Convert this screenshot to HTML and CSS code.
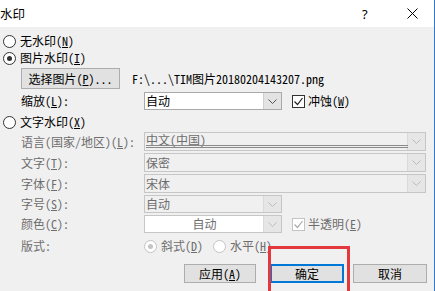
FILE: index.html
```html
<!DOCTYPE html>
<html>
<head>
<meta charset="utf-8">
<link rel="stylesheet" href="styles.css">
</head>
<body>
<div class="title">
  <span class="ttext">水印</span>
  <span class="help">?</span>
  <svg class="close" width="11" height="11" viewBox="0 0 11 11"><path d="M0.5 0.5L10.5 10.5M10.5 0.5L0.5 10.5" stroke="#000" stroke-width="1" fill="none"/></svg>
</div>
<div class="content">
  <div class="row r1"><span class="radio"></span><span class="rlabel">无水印(<u>N</u>)</span></div>
  <div class="row r2"><span class="radio on"></span><span class="rlabel">图片水印(<u>I</u>)</span></div>
  <div class="row r3 indent"><span class="btn pick">选择图片(<u>P</u>)...</span><span class="path">F:\...\TIM图片20180204143207.png</span></div>
  <div class="row r4 indent">
    <span class="label">缩放(<u>L</u>):</span>
    <span class="combo short"><span class="val">自动</span><span class="dd"><svg width="9" height="5" viewBox="0 0 9 5"><path d="M0.5 0.5L4.5 4.5L8.5 0.5" stroke="#555" fill="none"/></svg></span></span>
    <span class="check on"><svg width="11" height="11" viewBox="0 0 11 11"><path d="M1.5 5.5L4.5 8.5L9.5 2" stroke="#222" stroke-width="1.2" fill="none"/></svg></span>
    <span class="clabel">冲蚀(<u>W</u>)</span>
  </div>
  <div class="row r5"><span class="radio"></span><span class="rlabel">文字水印(<u>X</u>)</span></div>
  <div class="row r6 indent">
    <span class="label dis">语言(国家/地区)(<u>L</u>):</span>
    <span class="combo wide dis lang"><span class="val up">中文(中国)</span><span class="dd"><svg width="9" height="5" viewBox="0 0 9 5"><path d="M0.5 0.5L4.5 4.5L8.5 0.5" stroke="#bbb" fill="none"/></svg></span></span>
  </div>
  <div class="row r7 indent">
    <span class="label dis">文字(<u>T</u>):</span>
    <span class="combo wide dis"><span class="val">保密</span><span class="dd"><svg width="9" height="5" viewBox="0 0 9 5"><path d="M0.5 0.5L4.5 4.5L8.5 0.5" stroke="#bbb" fill="none"/></svg></span></span>
  </div>
  <div class="row r8 indent">
    <span class="label dis">字体(<u>F</u>):</span>
    <span class="combo wide dis"><span class="val">宋体</span><span class="dd"><svg width="9" height="5" viewBox="0 0 9 5"><path d="M0.5 0.5L4.5 4.5L8.5 0.5" stroke="#bbb" fill="none"/></svg></span></span>
  </div>
  <div class="row r9 indent">
    <span class="label dis">字号(<u>S</u>):</span>
    <span class="combo short dis"><span class="val">自动</span><span class="dd"><svg width="9" height="5" viewBox="0 0 9 5"><path d="M0.5 0.5L4.5 4.5L8.5 0.5" stroke="#bbb" fill="none"/></svg></span></span>
  </div>
  <div class="row r10 indent">
    <span class="label dis">颜色(<u>C</u>):</span>
    <span class="combo short dis color"><span class="val center">自动</span><span class="dd"><svg width="9" height="5" viewBox="0 0 9 5"><path d="M0.5 0.5L4.5 4.5L8.5 0.5" stroke="#bbb" fill="none"/></svg></span></span>
    <span class="check on dis"><svg width="11" height="11" viewBox="0 0 11 11"><path d="M1.5 5.5L4.5 8.5L9.5 2" stroke="#aaa" stroke-width="1.2" fill="none"/></svg></span>
    <span class="clabel dis">半透明(<u>E</u>)</span>
  </div>
  <div class="row r11 indent">
    <span class="label dis">版式:</span>
    <span class="radio on dis"></span><span class="rlabel dis">斜式(<u>D</u>)</span>
    <span class="radio dis second"></span><span class="rlabel dis">水平(<u>H</u>)</span>
  </div>
  <div class="row r12">
    <span class="btn apply">应用(<u>A</u>)</span>
    <span class="btn ok">确定</span>
    <span class="btn cancel">取消</span>
  </div>
</div>
<div class="highlight"></div>
</body>
</html>
```

FILE: styles.css
```css
html, body {
  margin: 0;
  padding: 0;
}
body {
  width: 435px;
  height: 291px;
  overflow: hidden;
  background: #f0f0f0;
  font-family: "Noto Sans Mono CJK SC", "Noto Sans CJK SC", sans-serif;
  font-size: 12px;
  color: #000;
  position: relative;
  border-right: 1px solid #2c7bd0;
  box-sizing: border-box;
}
u {
  text-decoration: underline;
  text-underline-offset: 1px;
}
.title {
  height: 27px;
  background: #fff;
  display: flex;
  align-items: center;
  font-family: "Noto Sans CJK SC", sans-serif;
}
.ttext {
  font-size: 12.5px;
  margin-left: 0;
}
.help {
  margin-left: auto;
  font-family: "Noto Sans", sans-serif;
  font-size: 13px;
  width: 8px;
}
.close {
  margin-left: 37px;
  margin-right: 16px;
}
.content {
  display: flex;
  flex-direction: column;
}
.row {
  display: flex;
  align-items: center;
  line-height: 14px;
  white-space: nowrap;
}
.indent {
  padding-left: 21px;
}
.r1 { margin-top: 7px; height: 14px; }
.r2 { margin-top: 3px; height: 14px; }
.r3 { margin-top: 3px; height: 21px; }
.r4 { margin-top: 3px; height: 18px; }
.r5 { margin-top: 5px; height: 14px; }
.r6 { margin-top: 3px; height: 19px; }
.r7 { margin-top: 2px; height: 19px; }
.r8 { margin-top: 2px; height: 19px; }
.r9 { margin-top: 2px; height: 18px; }
.r10 { margin-top: 2px; height: 18px; }
.r11 { margin-top: 6px; height: 14px; }
.r12 { margin-top: 11px; height: 19px; }

.radio {
  width: 13px;
  height: 13px;
  box-sizing: border-box;
  border: 1px solid #333;
  border-radius: 50%;
  background: #fff;
  margin-left: 3px;
  display: flex;
  align-items: center;
  justify-content: center;
  flex: none;
}
.radio.on::after {
  content: "";
  width: 5px;
  height: 5px;
  border-radius: 50%;
  background: #333;
}
.radio.dis {
  border-color: #c4c4c4;
  margin-left: 0;
}
.radio.dis.on::after {
  background: #c4c4c4;
}
.radio.second {
  margin-left: 10px;
}
.rlabel {
  margin-left: 4px;
}
.dis {
  color: #6d6d6d;
}
.label {
  width: 123px;
  flex: none;
}
.btn {
  display: flex;
  align-items: center;
  justify-content: center;
  box-sizing: border-box;
  border: 1px solid #adadad;
  background: #e1e1e1;
  height: 100%;
  flex: none;
}
.pick {
  width: 99px;
}
.path {
  margin-left: 12px;
}
.combo {
  display: flex;
  box-sizing: border-box;
  border: 1px solid #a9a9a9;
  background: #fff;
  height: 100%;
  flex: none;
  position: relative;
}
.combo.short { width: 138px; }
.combo.wide { width: 282px; }
.combo .val {
  flex: 1;
  padding-left: 1px;
  display: flex;
  align-items: center;
}
.combo .val.up {
  padding-bottom: 3px;
}
.combo .val.center {
  justify-content: center;
}
.combo .dd {
  width: 17px;
  background: #e3e3e3;
  border-left: 1px solid #d0d0d0;
  display: flex;
  align-items: center;
  justify-content: center;
}
.combo.dis {
  border-color: #c6c6c6;
  background: #f0f0f0;
}
.combo.dis .dd {
  background: #e6e6e6;
  border-left-color: #dadada;
}
.combo.color {
  background: #fff;
}
.combo.lang::after {
  content: "";
  position: absolute;
  left: 1px;
  right: 17px;
  bottom: 2px;
  height: 1px;
  border-top: 1px solid #8a8a8a;
  border-bottom: 1px solid #8a8a8a;
}
.check {
  width: 13px;
  height: 13px;
  box-sizing: border-box;
  border: 1px solid #333;
  background: #fff;
  margin-left: 10px;
  display: flex;
  align-items: center;
  justify-content: center;
  flex: none;
}
.check.dis {
  border-color: #c4c4c4;
}
.clabel {
  margin-left: 3px;
}
.apply {
  margin-left: 184px;
  width: 72px;
}
.ok {
  margin-left: 14px;
  width: 74px;
  border-color: #0078d7;
  box-shadow: inset 0 0 0 1px #0078d7;
}
.cancel {
  margin-left: 9px;
  width: 74px;
}
.highlight {
  position: absolute;
  left: 268px;
  top: 246px;
  width: 82px;
  height: 45px;
  box-sizing: border-box;
  border: 3px solid #e4393c;
  border-bottom: none;
}
```
